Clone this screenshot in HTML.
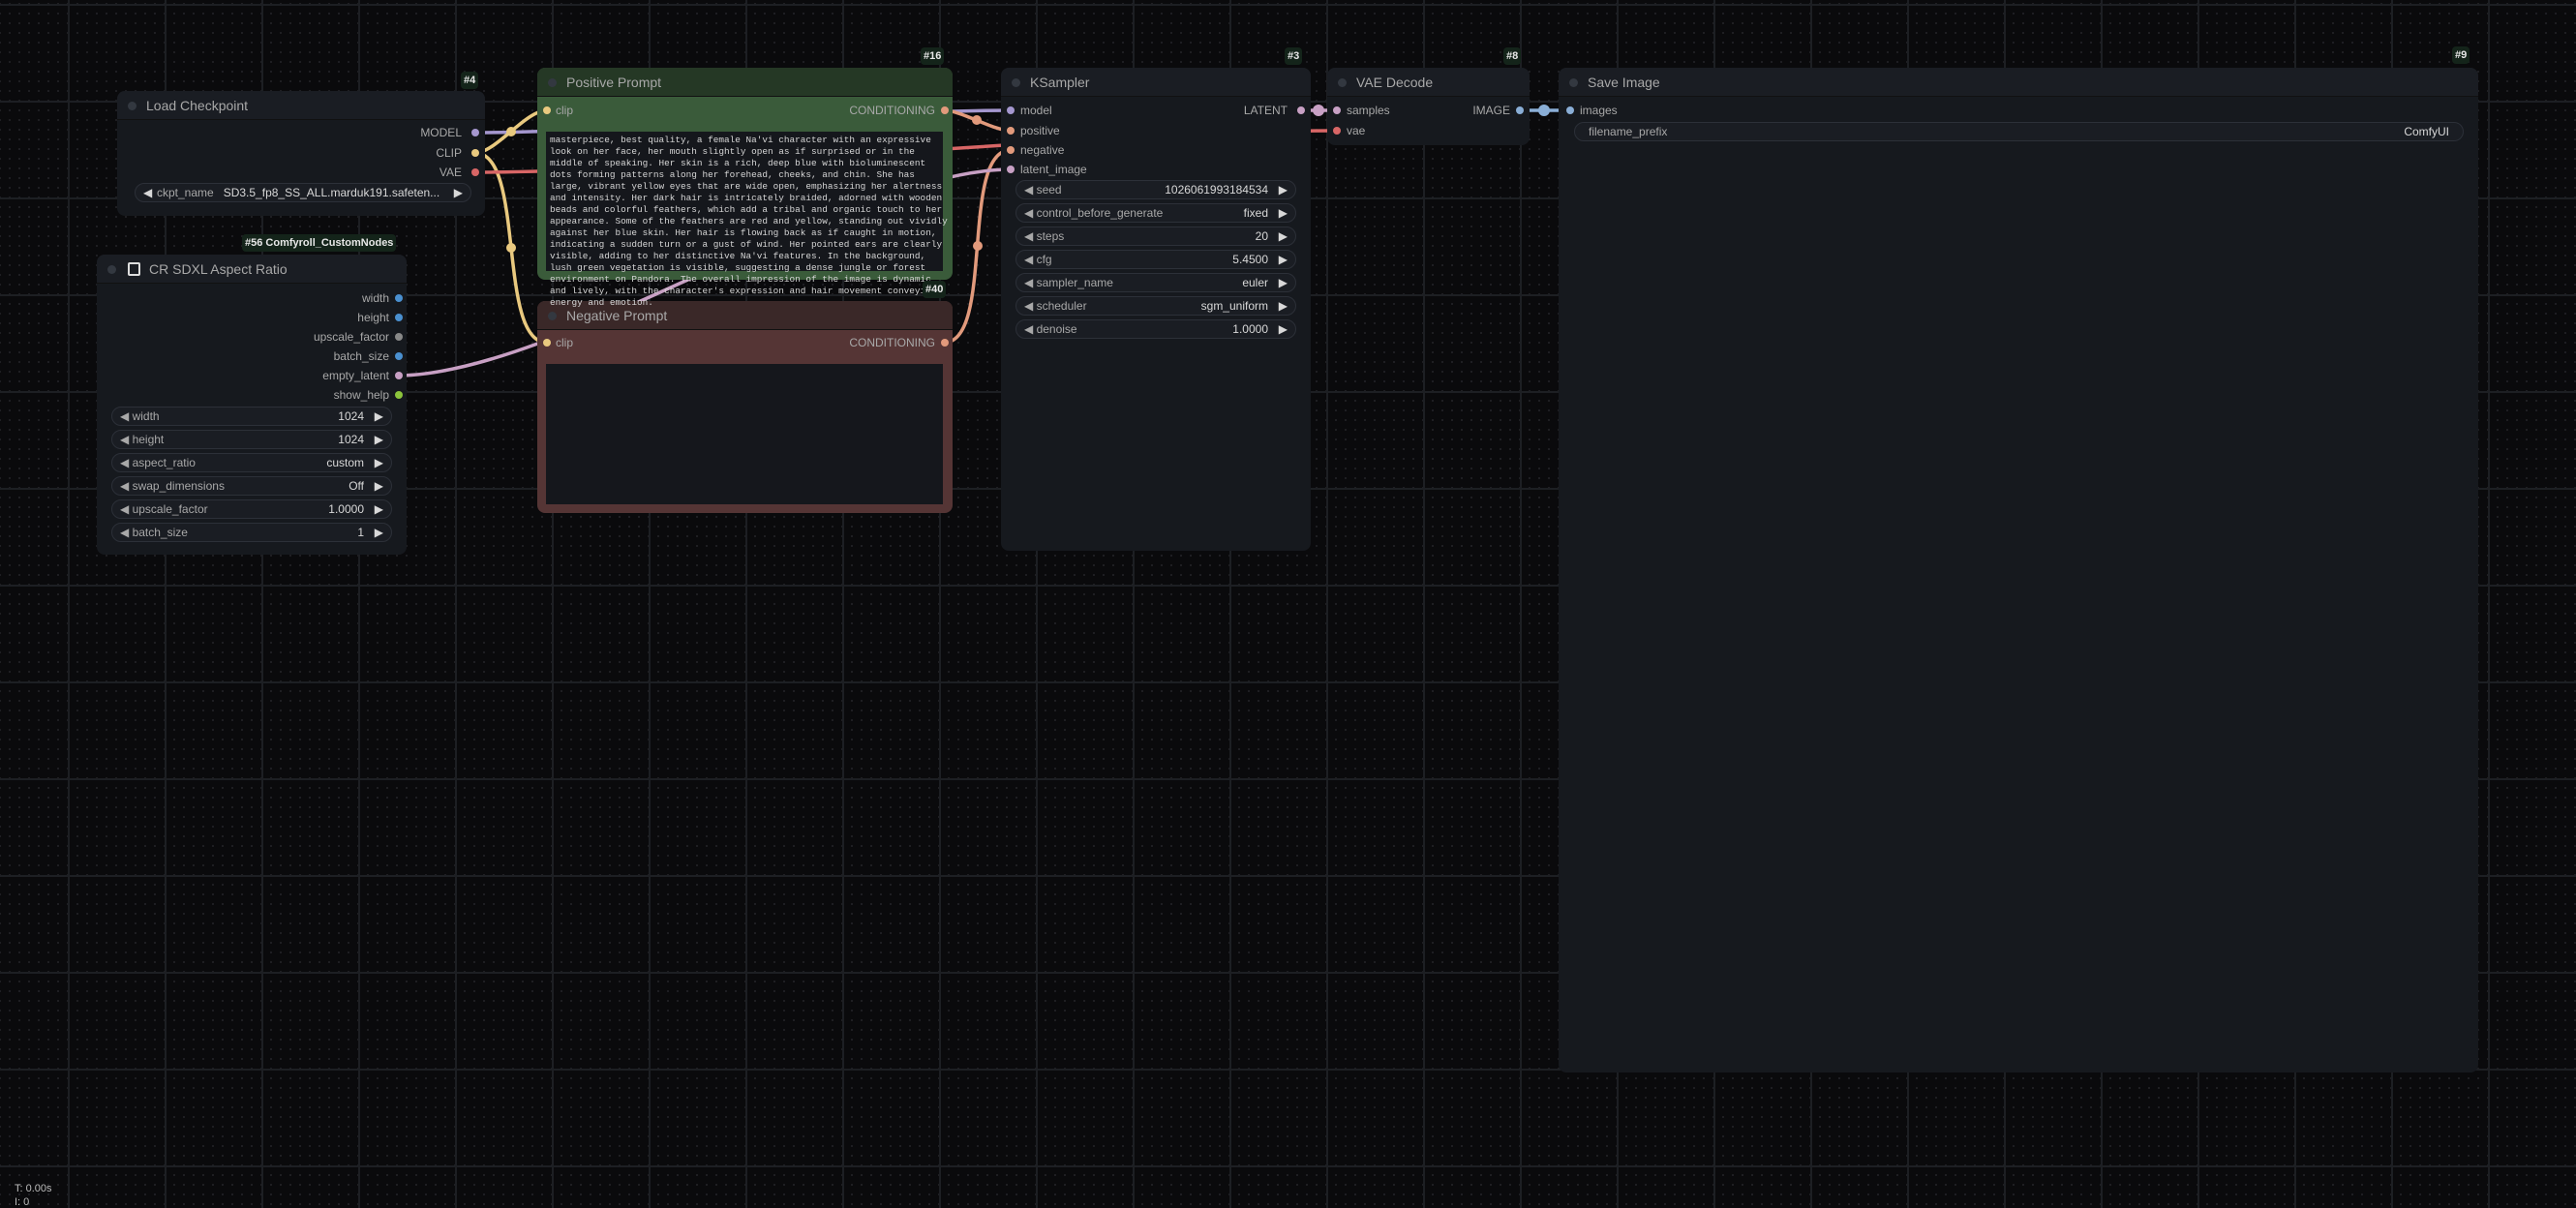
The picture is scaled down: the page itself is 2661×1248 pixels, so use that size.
<!DOCTYPE html>
<html><head><meta charset="utf-8"><style>
*{margin:0;padding:0;box-sizing:border-box}
body{width:2661px;height:1240px;overflow:hidden;position:relative;font-family:"Liberation Sans",sans-serif;
background-color:#0a0a0c;
background-image:linear-gradient(to right,#1d1f23 2px,transparent 2px),linear-gradient(to bottom,#1d1f23 2px,transparent 2px),radial-gradient(circle,#232428 0.8px,transparent 1.1px);
background-size:100px 100px,100px 100px,10px 10px;
background-position:70px 0,0 4px,-5px -1px;}
.node{position:absolute;background:#16191e;border-radius:8px;z-index:2}
.title{position:absolute;left:0;top:0;right:0;height:30px;background:#1a1d23;border-radius:8px 8px 0 0;border-bottom:1px solid #111;color:#a8a8a8;font-size:14px;line-height:30px;padding-left:30px}
.title:before{content:"";position:absolute;left:11px;top:11px;width:9px;height:9px;border-radius:50%;background:#333840}
.badge{position:absolute;background:#14241a;color:#e8e8e8;font-size:11px;font-weight:bold;padding:0 3px;height:18px;line-height:18px;border-radius:4px;z-index:3}
.lbl{position:absolute;font-size:12px;color:#a8a8a8;line-height:14px;white-space:nowrap}
.dot{position:absolute;width:8px;height:8px;border-radius:50%}
.w{position:absolute;height:20px;border-radius:10px;background:#1a1d23;border:1px solid #2c3038;font-size:12px;line-height:18px;color:#a8a8a8}
.w .l{position:absolute;left:8px;top:0}
.w .v{position:absolute;right:28px;top:0;color:#d8d8d8}
.w .r{position:absolute;right:8px;top:0;color:#d8d8d8}
.ta{position:absolute;background:#15171c}
pre{position:absolute;font-family:"Liberation Mono",monospace;font-size:9.4px;line-height:12px;color:#d6d6d6;z-index:5}
</style></head><body>
<svg width="2661" height="1240" style="position:absolute;left:0;top:0;z-index:1" fill="none" stroke-width="3.5">
<path d="M491 137 C629 137 906 114 1044 114" stroke="#a597cf"/>
<path d="M491 158 C512 158 543 114 565 114" stroke="#e9c97f"/>
<path d="M491 158 C543 158 513 354 565 354" stroke="#e9c97f"/>
<path d="M491 178 C714 178 1158 135 1381 135" stroke="#d86666"/>
<path d="M975 114 C993 114 1026 135 1044 135" stroke="#e29a7c"/>
<path d="M975 354 C1028 354 991 155 1044 155" stroke="#e29a7c"/>
<path d="M410 388 C577 388 877 175 1044 175" stroke="#c8a0c4"/>
<path d="M1343 114 L1381 114" stroke="#c8a0c4"/>
<path d="M1569 114 L1622 114" stroke="#8aaed6"/>
<g stroke="none">
<circle cx="528" cy="136" r="5" fill="#e9c97f"/><circle cx="528" cy="256" r="5" fill="#e9c97f"/>
<circle cx="1010" cy="254" r="5" fill="#e29a7c"/><circle cx="1009" cy="124" r="5" fill="#e29a7c"/>
<circle cx="1362" cy="114" r="6" fill="#c8a0c4"/><circle cx="1595" cy="114" r="6" fill="#8aaed6"/>
</g></svg>

<div class="badge" style="left:476px;top:74px">#4</div>
<div class="node" style="left:121px;top:94px;width:380px;height:129px">
<div class="title">Load Checkpoint</div>
<div class="lbl" style="right:24px;top:36px">MODEL</div><div class="dot" style="right:6px;top:39px;background:#a597cf"></div>
<div class="lbl" style="right:24px;top:57px">CLIP</div><div class="dot" style="right:6px;top:60px;background:#e9c97f"></div>
<div class="lbl" style="right:24px;top:77px">VAE</div><div class="dot" style="right:6px;top:80px;background:#d86666"></div>
<div class="w" style="left:18px;top:95px;width:348px"><span class="r" style="left:8px;right:auto">◀</span><span class="l" style="left:22px">ckpt_name &nbsp; <span style="color:#d8d8d8">SD3.5_fp8_SS_ALL.marduk191.safeten...</span></span><span class="r">▶</span></div>
</div>

<div class="badge" style="left:250px;top:242px">#56 Comfyroll_CustomNodes</div>
<div class="node" style="left:100px;top:263px;width:320px;height:310px">
<div class="title" style="padding-left:54px">CR SDXL Aspect Ratio<span style="position:absolute;left:32px;top:8px;width:13px;height:14px;border:2px solid #ddd;border-radius:2px"></span></div>
<div class="lbl" style="right:18px;top:38px">width</div><div class="dot" style="right:4px;top:41px;background:#4a90d0"></div>
<div class="lbl" style="right:18px;top:58px">height</div><div class="dot" style="right:4px;top:61px;background:#4a90d0"></div>
<div class="lbl" style="right:18px;top:78px">upscale_factor</div><div class="dot" style="right:4px;top:81px;background:#888"></div>
<div class="lbl" style="right:18px;top:98px">batch_size</div><div class="dot" style="right:4px;top:101px;background:#4a90d0"></div>
<div class="lbl" style="right:18px;top:118px">empty_latent</div><div class="dot" style="right:4px;top:121px;background:#c8a0c4"></div>
<div class="lbl" style="right:18px;top:138px">show_help</div><div class="dot" style="right:4px;top:141px;background:#8cc43c"></div>
<div class="w" style="left:15px;top:157px;width:290px"><span class="l">◀ width</span><span class="v">1024</span><span class="r">▶</span></div>
<div class="w" style="left:15px;top:181px;width:290px"><span class="l">◀ height</span><span class="v">1024</span><span class="r">▶</span></div>
<div class="w" style="left:15px;top:205px;width:290px"><span class="l">◀ aspect_ratio</span><span class="v">custom</span><span class="r">▶</span></div>
<div class="w" style="left:15px;top:229px;width:290px"><span class="l">◀ swap_dimensions</span><span class="v">Off</span><span class="r">▶</span></div>
<div class="w" style="left:15px;top:253px;width:290px"><span class="l">◀ upscale_factor</span><span class="v">1.0000</span><span class="r">▶</span></div>
<div class="w" style="left:15px;top:277px;width:290px"><span class="l">◀ batch_size</span><span class="v">1</span><span class="r">▶</span></div>
</div>

<div class="badge" style="left:951px;top:49px">#16</div>
<div class="node" style="left:555px;top:70px;width:429px;height:219px;background:#3a5b3a">
<div class="title" style="background:#253825;color:#a8a8a8">Positive Prompt</div>
<div class="dot" style="left:6px;top:40px;background:#e9c97f"></div><div class="lbl" style="left:19px;top:37px">clip</div>
<div class="lbl" style="right:18px;top:37px">CONDITIONING</div><div class="dot" style="right:4px;top:40px;background:#e29a7c"></div>
<div class="ta" style="left:9px;top:66px;width:410px;height:144px"></div>
</div>
<pre style="left:568px;top:139px">masterpiece, best quality, a female Na'vi character with an expressive
look on her face, her mouth slightly open as if surprised or in the
middle of speaking. Her skin is a rich, deep blue with bioluminescent
dots forming patterns along her forehead, cheeks, and chin. She has
large, vibrant yellow eyes that are wide open, emphasizing her alertness
and intensity. Her dark hair is intricately braided, adorned with wooden
beads and colorful feathers, which add a tribal and organic touch to her
appearance. Some of the feathers are red and yellow, standing out vividly
against her blue skin. Her hair is flowing back as if caught in motion,
indicating a sudden turn or a gust of wind. Her pointed ears are clearly
visible, adding to her distinctive Na'vi features. In the background,
lush green vegetation is visible, suggesting a dense jungle or forest
environment on Pandora. The overall impression of the image is dynamic
and lively, with the character's expression and hair movement conveying
energy and emotion.</pre>

<div class="badge" style="left:953px;top:290px;z-index:6">#40</div>
<div class="node" style="left:555px;top:311px;width:429px;height:219px;background:#553535">
<div class="title" style="background:#3a2828">Negative Prompt</div>
<div class="dot" style="left:6px;top:39px;background:#e9c97f"></div><div class="lbl" style="left:19px;top:36px">clip</div>
<div class="lbl" style="right:18px;top:36px">CONDITIONING</div><div class="dot" style="right:4px;top:39px;background:#e29a7c"></div>
<div class="ta" style="left:9px;top:65px;width:410px;height:145px"></div>
</div>

<div class="badge" style="left:1327px;top:49px">#3</div>
<div class="node" style="left:1034px;top:70px;width:320px;height:499px">
<div class="title">KSampler</div>
<div class="dot" style="left:6px;top:40px;background:#a597cf"></div><div class="lbl" style="left:20px;top:37px">model</div>
<div class="dot" style="left:6px;top:61px;background:#e29a7c"></div><div class="lbl" style="left:20px;top:58px">positive</div>
<div class="dot" style="left:6px;top:81px;background:#e29a7c"></div><div class="lbl" style="left:20px;top:78px">negative</div>
<div class="dot" style="left:6px;top:101px;background:#c8a0c4"></div><div class="lbl" style="left:20px;top:98px">latent_image</div>
<div class="lbl" style="right:24px;top:37px">LATENT</div><div class="dot" style="right:6px;top:40px;background:#c8a0c4"></div>
<div class="w" style="left:15px;top:116px;width:290px"><span class="l">◀ seed</span><span class="v">1026061993184534</span><span class="r">▶</span></div>
<div class="w" style="left:15px;top:140px;width:290px"><span class="l">◀ control_before_generate</span><span class="v">fixed</span><span class="r">▶</span></div>
<div class="w" style="left:15px;top:164px;width:290px"><span class="l">◀ steps</span><span class="v">20</span><span class="r">▶</span></div>
<div class="w" style="left:15px;top:188px;width:290px"><span class="l">◀ cfg</span><span class="v">5.4500</span><span class="r">▶</span></div>
<div class="w" style="left:15px;top:212px;width:290px"><span class="l">◀ sampler_name</span><span class="v">euler</span><span class="r">▶</span></div>
<div class="w" style="left:15px;top:236px;width:290px"><span class="l">◀ scheduler</span><span class="v">sgm_uniform</span><span class="r">▶</span></div>
<div class="w" style="left:15px;top:260px;width:290px"><span class="l">◀ denoise</span><span class="v">1.0000</span><span class="r">▶</span></div>
</div>

<div class="badge" style="left:1553px;top:49px">#8</div>
<div class="node" style="left:1371px;top:70px;width:209px;height:80px">
<div class="title">VAE Decode</div>
<div class="dot" style="left:6px;top:40px;background:#c8a0c4"></div><div class="lbl" style="left:20px;top:37px">samples</div>
<div class="dot" style="left:6px;top:61px;background:#d86666"></div><div class="lbl" style="left:20px;top:58px">vae</div>
<div class="lbl" style="right:20px;top:37px">IMAGE</div><div class="dot" style="right:6px;top:40px;background:#8aaed6"></div>
</div>

<div class="badge" style="left:2533px;top:48px">#9</div>
<div class="node" style="left:1610px;top:70px;width:950px;height:1038px">
<div class="title">Save Image</div>
<div class="dot" style="left:8px;top:40px;background:#8aaed6"></div><div class="lbl" style="left:22px;top:37px">images</div>
<div class="w" style="left:16px;top:56px;width:919px"><span class="l" style="left:14px">filename_prefix</span><span class="v" style="right:14px">ComfyUI</span></div>
</div>

<div style="position:absolute;left:15px;top:1222px;font-size:11px;color:#bbb">T: 0.00s</div>
<div style="position:absolute;left:15px;top:1236px;font-size:11px;color:#bbb">I: 0</div>
</body></html>
